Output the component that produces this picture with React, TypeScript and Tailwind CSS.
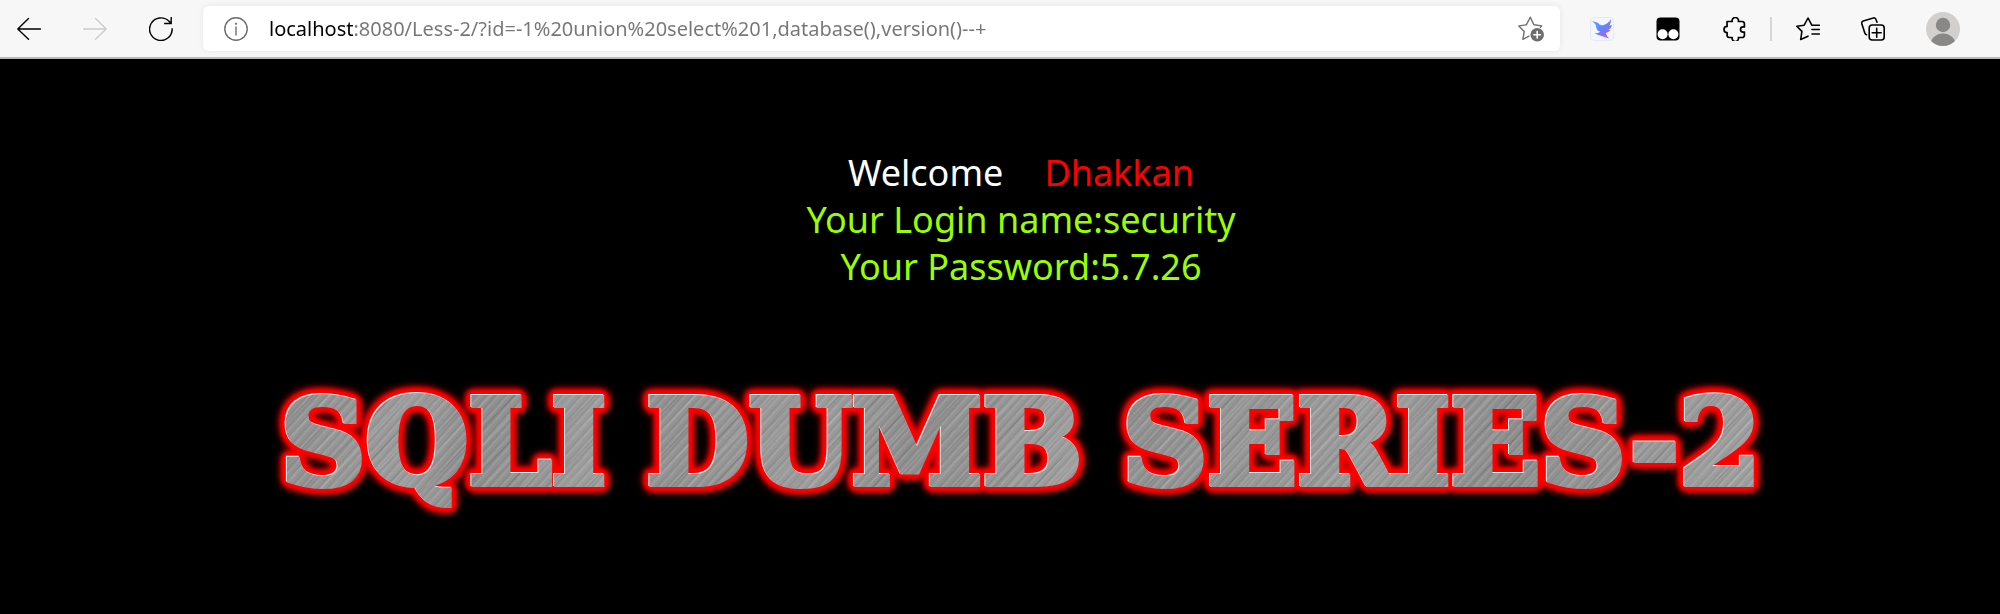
import React, { useState } from 'react';

const iconProps = {
  className: 'h-6 w-6',
  viewBox: '0 0 24 24',
  fill: 'none',
  stroke: 'currentColor',
  strokeWidth: 1.4,
  strokeLinecap: 'round',
  strokeLinejoin: 'round',
} as const;

const BackIcon = () => (
  <svg {...iconProps}>
    <path d="M23.5 12H.8M11.5 1.5.8 12l10.7 10.2" />
  </svg>
);

const ForwardIcon = () => (
  <svg {...iconProps}>
    <path d="M.5 12h22.7M12.5 1.5 23.2 12 12.5 22.2" />
  </svg>
);

const ReloadIcon = () => (
  <svg {...iconProps}>
    <path d="M23.2 12A11.3 11.3 0 1 1 20 4.3l2 2M22.2.8v5.7h-6.4" strokeLinecap="square" strokeLinejoin="miter" />
  </svg>
);

const InfoIcon = () => (
  <svg {...iconProps}>
    <circle cx="12" cy="12" r="11.2" />
    <path d="M12 10v8" />
    <circle cx="12" cy="6.8" r="1.1" fill="currentColor" stroke="none" />
  </svg>
);

const AddFavoriteIcon = () => (
  <svg {...iconProps} className="h-[26px] w-[26px]" viewBox="0 0 26 26">
    <path d="M11 20.2 4.9 23.3l1.3-7.9L.8 9.9l7.6-1.1L12.3 1.2l3.6 7.6 7.8 1.1-1.2 1.3" />
    <circle cx="19.2" cy="18.8" r="6.8" fill="currentColor" stroke="none" />
    <path d="M19.2 15.5v6.6M15.9 18.8h6.6" stroke="#fff" strokeWidth="1.6" />
  </svg>
);

const BirdIcon = () => (
  <svg className="h-6 w-6" viewBox="0 0 24 24">
    <defs>
      <linearGradient id="bird" x1="0" y1="0" x2="0.8" y2="1">
        <stop offset="0" stopColor="#4cb2fb" />
        <stop offset="0.5" stopColor="#6385f7" />
        <stop offset="1" stopColor="#b45cf5" />
      </linearGradient>
    </defs>
    <rect x="0.5" y="0.5" width="23" height="23" rx="3.5" fill="#f3f5ff" stroke="#e4e8fc" />
    <path
      d="M2 4.500C5 4.300 7.500 5 9.500 7.500L12.500 8.500C16 7.500 19 5.500 20.800 2.200C21 5 20.500 6.800 19.500 8.600L22 8.200C21.500 10.500 20 12 18.300 13L20.500 13.200C19 14.800 17.700 15.400 16 15.700C16.200 18 17.200 19.800 19.500 21.500C15 20.200 10 18.500 4.500 16.500C7 16.500 8.800 16 10.200 14.800C7.500 13.800 6.300 12 6 9C5.500 7 4.300 5.600 2 4.500Z"
      fill="url(#bird)"
    />
  </svg>
);

const TamperIcon = () => (
  <svg className="h-6 w-6" viewBox="0 0 24 24">
    <rect x="0.5" y="0.5" width="23" height="23" rx="4" fill="#000" />
    <circle cx="6.6" cy="17.3" r="5" fill="#fff" />
    <circle cx="17.4" cy="17.3" r="5" fill="#fff" />
  </svg>
);

const PuzzleIcon = () => (
  <svg {...iconProps} strokeWidth={1.7}>
    <path d="M5 4.500h5.200a3.200 3.200 0 1 1 6.200 0h3.800a2.200 2.200 0 0 1 2.200 2.200v3.200h-1.300a2.500 2.500 0 0 0 0 5.200h1.300v3.200a2.200 2.200 0 0 1-2.200 2.200h-3.800a3.200 3.200 0 1 1-6.200 0H7.300a2.200 2.200 0 0 1-2.200-2.200v-2.700a3.100 3.100 0 0 1 0-6.200z" />
  </svg>
);

const FavoritesIcon = () => (
  <svg {...iconProps} strokeWidth={1.6}>
    <path d="M12 19.2 4.700 22.500l1.200-8.100L.8 9.200l7.400-1L12 1l3.800 7.200M16 8.300h7.300M16 12.500h7.300M16 17h7.300" />
  </svg>
);

const CollectionsIcon = () => (
  <svg {...iconProps} strokeWidth={1.6}>
    <rect x="8.200" y="8" width="15" height="15" rx="3" />
    <path d="M15.700 11.200v9M11.200 15.700h9M16 5.200 15 2.400A2.200 2.200 0 0 0 12.200 1L2.300 3.900A2.200 2.200 0 0 0 .8 6.700l3 9.400a2.400 2.400 0 0 0 1.800 1.600" />
  </svg>
);

const AvatarIcon = () => (
  <svg className="h-[34px] w-[34px]" viewBox="0 0 34 34">
    <clipPath id="avatar">
      <circle cx="17" cy="17" r="17" />
    </clipPath>
    <g clipPath="url(#avatar)">
      <rect width="34" height="34" fill="#d2d0ce" />
      <circle cx="17" cy="13" r="7.200" fill="#8a8886" />
      <ellipse cx="17" cy="33" rx="12.500" ry="11.500" fill="#8a8886" />
    </g>
  </svg>
);

const IconButton = ({ label, disabled, children }: { label: string; disabled?: boolean; children: React.ReactNode }) => (
  <button type="button" aria-label={label} disabled={disabled} className="shrink-0 text-black disabled:text-[#cccccc]">
    {children}
  </button>
);

const Toolbar = () => {
  const [url, setUrl] = useState('localhost:8080/Less-2/?id=-1%20union%20select%201,database(),version()--+');

  return (
    <header className="flex items-center border-b-2 border-[#b9b9b9] bg-[#f7f7f7] pt-1.5 pr-10 pb-1.5 pl-[17px]">
      <nav className="flex items-center gap-[42px]">
        <IconButton label="Back"><BackIcon /></IconButton>
        <IconButton label="Forward" disabled><ForwardIcon /></IconButton>
        <IconButton label="Reload"><ReloadIcon /></IconButton>
      </nav>

      <div className="mx-[30px] flex h-[45px] flex-1 items-center rounded-md bg-white pr-4 pl-[21px] text-[#6e6e6e] shadow-[0_0_6px_rgba(0,0,0,0.08)]">
        <InfoIcon />
        {/* the host part is drawn darker than the rest of the address */}
        <input
          type="text"
          aria-label="Address"
          value={url}
          onChange={(e) => setUrl(e.target.value)}
          className="mx-[21px] flex-1 bg-[linear-gradient(90deg,#000_84px,#767676_84px)] bg-clip-text font-['Noto_Sans','Open_Sans',sans-serif] text-[20px] leading-7 text-transparent outline-none"
        />
        <button type="button" aria-label="Add to favorites">
          <AddFavoriteIcon />
        </button>
      </div>

      <div className="flex items-center gap-[42px]">
        <IconButton label="Bird extension"><BirdIcon /></IconButton>
        <IconButton label="Tampermonkey"><TamperIcon /></IconButton>
        <IconButton label="Extensions"><PuzzleIcon /></IconButton>
      </div>
      <div className="mx-6 h-6 w-0.5 bg-[#d6d6d6]" />
      <div className="flex items-center gap-[41px]">
        <IconButton label="Favorites"><FavoritesIcon /></IconButton>
        <IconButton label="Collections"><CollectionsIcon /></IconButton>
        <IconButton label="Profile"><AvatarIcon /></IconButton>
      </div>
    </header>
  );
};

const bannerWords = ['SQLI', 'DUMB', 'SERIES-2'];

const Banner = () => (
  <h1 className="flex justify-center gap-10 font-['DejaVu_Serif',serif] text-[118px] leading-[136px] font-bold whitespace-nowrap [filter:drop-shadow(-1px_-1px_0_#f4f4f4)_drop-shadow(0_0_2px_#f00)_drop-shadow(0_0_2px_#f00)_drop-shadow(0_0_2px_#f00)_drop-shadow(0_0_2px_#f00)_drop-shadow(0_0_3px_#f00)]">
    {bannerWords.map((word) => (
      <span
        key={word}
        className="bg-[repeating-linear-gradient(132deg,rgba(255,255,255,0.1)_0_1px,transparent_2px_4px,rgba(0,0,0,0.08)_5px,transparent_6px_7px),repeating-linear-gradient(134deg,transparent_0_7px,rgba(0,0,0,0.12)_8px,transparent_9px_19px,rgba(255,255,255,0.14)_20px,transparent_22px_29px),linear-gradient(100deg,#909090,#9c9c9c_40%,#8e8e8e_60%,#a0a0a0)] bg-clip-text text-transparent [-webkit-text-stroke:6px_transparent]"
      >
        {word}
      </span>
    ))}
  </h1>
);

const App = () => {
  return (
    <div className="flex min-h-screen flex-col bg-black">
      <Toolbar />
      <main className="flex-1 pt-[90px] pl-[42px]">
        <div className="text-center font-['Noto_Sans','Open_Sans',sans-serif] text-[36px] leading-[47px] text-[#99ff00]">
          <p className="flex justify-center gap-[41px]">
            <span className="text-white">Welcome</span>
            <span className="text-[#ff0000]">Dhakkan</span>
          </p>
          <p>Your Login name:security</p>
          <p>Your Password:5.7.26</p>
        </div>
        <div className="mt-[85px]">
          <Banner />
        </div>
      </main>
    </div>
  );
};

export default App;
